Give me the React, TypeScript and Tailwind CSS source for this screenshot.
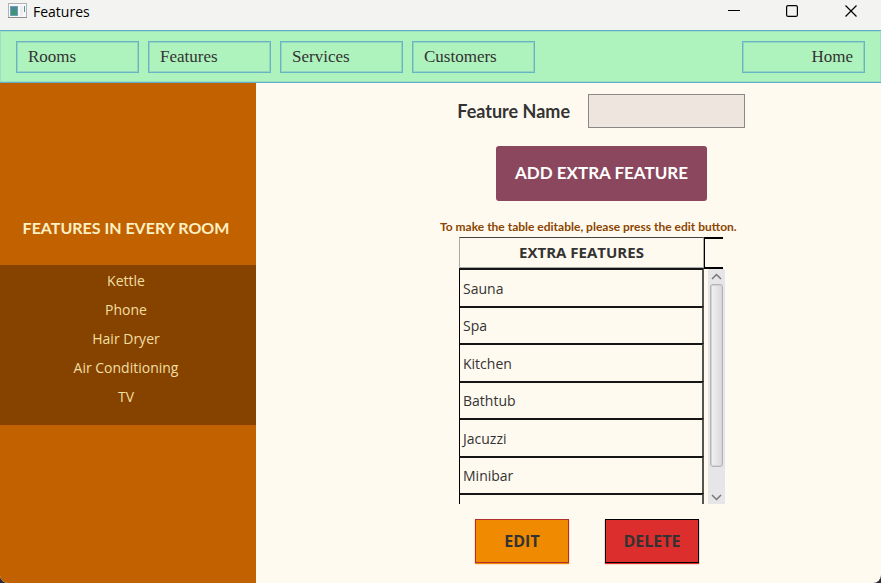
import { useState } from 'react';

const navItems = ['Rooms', 'Features', 'Services', 'Customers'];
const roomFeatures = ['Kettle', 'Phone', 'Hair Dryer', 'Air Conditioning', 'TV'];
const extraFeatures = ['Sauna', 'Spa', 'Kitchen', 'Bathtub', 'Jacuzzi', 'Minibar', ''];

function TitleBar() {
  return (
    <header className="flex h-[30px] items-start justify-between bg-[#f3f3f2] pl-2 text-black">
      <div className="flex items-center gap-[6px]">
        <svg width="19" height="17" viewBox="0 0 19 17" className="-mt-[3px]" aria-hidden="true">
          <rect x="0.5" y="1.5" width="18" height="14" fill="#f7f8f9" stroke="#b0b2b5" />
          <path d="M0 15.500h19" stroke="#8c8e91" />
          <rect x="2" y="4" width="8" height="10" fill="#6f9dba" />
          <rect x="3" y="5" width="6" height="8" fill="#3f9573" />
          <path d="M3 5h6v2L3 11z" fill="#478b90" />
          <rect x="12" y="4" width="3" height="10" fill="#eceeef" />
          <path d="M16.500 4v6" stroke="#4b9b93" />
        </svg>
        <h1 className="text-[14px] leading-6 font-normal">Features</h1>
      </div>
      <div className="flex">
        <button aria-label="Minimize" className="flex h-[22px] w-[58px] items-center justify-center">
          <svg width="12" height="12" viewBox="0 0 12 12"><path d="M0 5.500h12" stroke="#000" /></svg>
        </button>
        <button aria-label="Maximize" className="flex h-[22px] w-[58px] items-center justify-center">
          <svg width="12" height="12" viewBox="0 0 12 12"><rect x="0.6" y="0.6" width="10.800" height="10.800" rx="1.500" fill="none" stroke="#000" strokeWidth="1.200" /></svg>
        </button>
        <button aria-label="Close" className="flex h-[22px] w-[60px] items-center justify-center">
          <svg width="12" height="12" viewBox="0 0 12 12"><path d="M0.500 0.500l11 11M11.500 0.500l-11 11" stroke="#000" strokeWidth="1.200" /></svg>
        </button>
      </div>
    </header>
  );
}

function NavBar() {
  const item =
    "h-8 w-[123px] border border-[#68b4c2] px-[11px] font-['Liberation_Serif',serif] text-[17px] leading-7 text-[#333333] shadow-[inset_0_0_0_1px_#93d6c0]";
  return (
    <nav className="flex items-center justify-between border-y border-[#5fb0c4] bg-[#aef2bd] px-4 pt-[10px] pb-[9px] shadow-[inset_0_0_0_1px_#9be0c2]">
      <div className="flex gap-[9px]">
        {navItems.map((label) => (
          <button key={label} className={`${item} text-left`}>{label}</button>
        ))}
      </div>
      <button className={`${item} text-right`}>Home</button>
    </nav>
  );
}

function Sidebar() {
  return (
    <aside className="w-64 shrink-0 bg-[#c26100] pt-[129px] text-center">
      <h2 className="pr-1 font-[Lato,sans-serif] text-[16px] leading-8 font-bold text-[#fdf0c4]">
        FEATURES IN EVERY ROOM
      </h2>
      <ul className="mt-[21px] h-40 bg-[#864300] pt-px pr-1 text-[14px] text-[#f3dfa2]">
        {roomFeatures.map((name) => (
          <li key={name} className="h-[29px] leading-[30px]">{name}</li>
        ))}
      </ul>
    </aside>
  );
}

function ScrollBar() {
  return (
    <div className="flex w-[17px] flex-col items-center bg-[#e6e6e8] text-[#777777]">
      <button aria-label="Scroll up" className="flex h-[15px] items-center">
        <svg width="11" height="7" viewBox="0 0 11 7"><path d="M1 6l4.500-4.500L10 6" fill="none" stroke="currentColor" strokeWidth="1.500" /></svg>
      </button>
      <div className="h-[183px] w-[13px] rounded-[3px] border border-[#b3b3b6] bg-linear-to-r from-[#f2f2f2] to-[#d9d9db] shadow-[inset_0_0_0_1px_#d4d4d6]" />
      <div className="flex-1" />
      <button aria-label="Scroll down" className="flex h-[14px] items-center">
        <svg width="11" height="7" viewBox="0 0 11 7"><path d="M1 1l4.500 4.500L10 1" fill="none" stroke="currentColor" strokeWidth="1.500" /></svg>
      </button>
    </div>
  );
}

function FeatureTable() {
  return (
    <div className="ml-[19px] h-[267px] w-[266px] overflow-hidden">
      <div className="flex">
        <table className="w-[245px] table-fixed border-separate border-spacing-0">
          <thead>
            <tr>
              <th scope="col" className="h-[31px] border border-[#a9a9a5] border-t-[#444444] p-0 text-[15px] font-bold">
                EXTRA FEATURES
              </th>
            </tr>
          </thead>
          <tbody>
            {extraFeatures.map((name, index) => (
              <tr key={index} className="odd:h-[38px] even:h-[37px]">
                <td className="border-t-2 border-r-2 border-l border-t-[#151515] border-r-[#555550] border-l-black py-0 pl-[3px] text-[14px]">
                  {name}
                </td>
              </tr>
            ))}
          </tbody>
        </table>
        <div className="flex h-[267px] flex-1 flex-col">
          <div className="mr-[2px] h-8 border-2 border-r-0 border-l border-black" />
          <div className="flex flex-1 justify-end">
            <ScrollBar />
          </div>
        </div>
      </div>
    </div>
  );
}

export default function App() {
  const [name, setName] = useState('');
  return (
    <div className="bg-[#2b2b38] font-['Open_Sans',sans-serif] text-[#333333]">
      <div className="flex min-h-screen flex-col overflow-hidden rounded-b-lg bg-[#fffaf0]">
        <TitleBar />
        <NavBar />
        <div className="flex flex-1">
          <Sidebar />
          <main className="flex flex-1 justify-center pt-[11px] pl-12">
            <div className="w-[305px]">
              <div className="flex items-center justify-end gap-[18px]">
                <label htmlFor="feature-name" className="font-[Lato,sans-serif] text-[18px] leading-6 font-bold">
                  Feature Name
                </label>
                <input
                  id="feature-name"
                  value={name}
                  onChange={(event) => setName(event.target.value)}
                  className="h-[34px] w-[157px] border border-[#8a8785] bg-[#eee5df] px-2 outline-none"
                />
              </div>
              <button className="mt-[18px] ml-14 h-[55px] w-[211px] rounded-[3px] bg-[#8b475d] pb-[2px] font-[Lato,sans-serif] text-[17px] font-bold text-white">
                ADD EXTRA FEATURE
              </button>
              <p className="mt-4 font-[Lato,sans-serif] text-[12px] leading-5 font-bold whitespace-nowrap text-[#8b4500]">
                To make the table editable, please press the edit button.
              </p>
              <FeatureTable />
              <div className="mt-[15px] flex gap-9 pl-[35px] text-[16px] font-bold">
                <button className="h-11 w-[94px] border border-[#b03030] bg-[#f08a00] shadow-[0_1px_1px_#f08a00]">EDIT</button>
                <button className="h-11 w-[94px] border border-black bg-[#dd2e2e] shadow-[0_1px_1px_#dd2e2e]">DELETE</button>
              </div>
            </div>
          </main>
        </div>
      </div>
    </div>
  );
}
